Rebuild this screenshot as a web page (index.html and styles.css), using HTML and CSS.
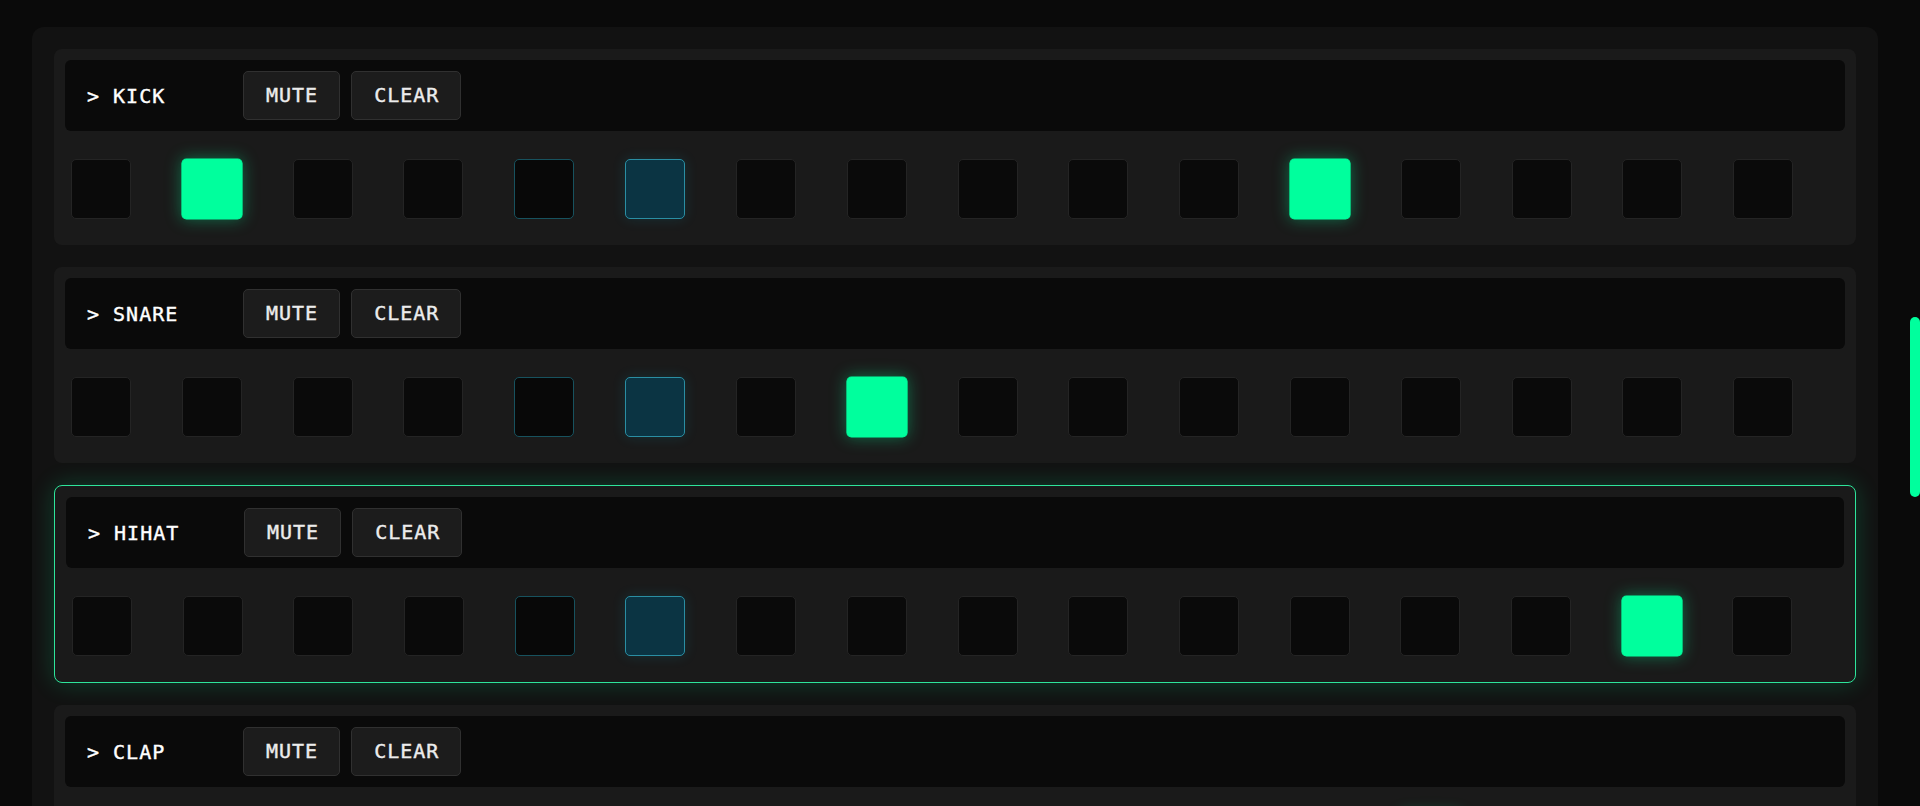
FILE: index.html
```html
<!DOCTYPE html>
<html lang="en">
<head>
<meta charset="utf-8">
<title>Step Sequencer</title>
<link rel="stylesheet" href="styles.css">
</head>
<body>
<div class="page">
  <main class="app">
    <section class="panel">
      <div class="track">
        <div class="track-head">
          <span class="track-name">&gt; KICK</span>
          <button class="btn">MUTE</button>
          <button class="btn">CLEAR</button>
        </div>
        <div class="steps">
          <div class="step"></div><div class="step on"></div><div class="step"></div><div class="step"></div>
          <div class="step trail"></div><div class="step head"></div><div class="step"></div><div class="step"></div>
          <div class="step"></div><div class="step"></div><div class="step"></div><div class="step on"></div>
          <div class="step"></div><div class="step"></div><div class="step"></div><div class="step"></div>
        </div>
      </div>

      <div class="track">
        <div class="track-head">
          <span class="track-name">&gt; SNARE</span>
          <button class="btn">MUTE</button>
          <button class="btn">CLEAR</button>
        </div>
        <div class="steps">
          <div class="step"></div><div class="step"></div><div class="step"></div><div class="step"></div>
          <div class="step trail"></div><div class="step head"></div><div class="step"></div><div class="step on"></div>
          <div class="step"></div><div class="step"></div><div class="step"></div><div class="step"></div>
          <div class="step"></div><div class="step"></div><div class="step"></div><div class="step"></div>
        </div>
      </div>

      <div class="track is-selected">
        <div class="track-head">
          <span class="track-name">&gt; HIHAT</span>
          <button class="btn">MUTE</button>
          <button class="btn">CLEAR</button>
        </div>
        <div class="steps">
          <div class="step"></div><div class="step"></div><div class="step"></div><div class="step"></div>
          <div class="step trail"></div><div class="step head"></div><div class="step"></div><div class="step"></div>
          <div class="step"></div><div class="step"></div><div class="step"></div><div class="step"></div>
          <div class="step"></div><div class="step"></div><div class="step on"></div><div class="step"></div>
        </div>
      </div>

      <div class="track">
        <div class="track-head">
          <span class="track-name">&gt; CLAP</span>
          <button class="btn">MUTE</button>
          <button class="btn">CLEAR</button>
        </div>
        <div class="steps">
          <div class="step"></div><div class="step"></div><div class="step"></div><div class="step"></div>
          <div class="step trail"></div><div class="step head"></div><div class="step"></div><div class="step"></div>
          <div class="step"></div><div class="step"></div><div class="step"></div><div class="step"></div>
          <div class="step on"></div><div class="step"></div><div class="step"></div><div class="step"></div>
        </div>
      </div>
    </section>
  </main>
  <aside class="rail" aria-hidden="true">
    <div class="thumb"></div>
  </aside>
</div>
</body>
</html>
```

FILE: styles.css
```css
html {
  background: #0a0a0a;
}

body {
  margin: 0;
  background: #0a0a0a;
  color: #eeeeee;
  font-family: "DejaVu Sans Mono", "Liberation Mono", monospace;
}

.page {
  display: flex;
  align-items: stretch;
}

.app {
  flex: 1;
  min-width: 0;
  padding: 27px 32px 32px;
}

.rail {
  flex: none;
  width: 10px;
}

.thumb {
  margin-top: 317px;
  height: 180px;
  border-radius: 5px;
  background: #00ff9d;
}

.panel {
  background: #121212;
  border-radius: 12px;
  padding: 22px;
  display: flex;
  flex-direction: column;
  gap: 22px;
  box-shadow: 0 0 8px rgba(255, 255, 255, 0.015);
}

.track {
  background: #1a1a1a;
  border-radius: 8px;
  padding: 11px;
}

.track.is-selected {
  border: 1px solid #2ee59b;
  box-shadow: 0 0 24px rgba(0, 255, 157, 0.2);
}

.track-head {
  display: flex;
  align-items: center;
  gap: 11px;
  background: #0a0a0a;
  border-radius: 6px;
  padding: 11px 22px;
}

.track-name {
  width: 145px;
  flex: none;
  font-size: 20px;
  letter-spacing: 1px;
  color: #ffffff;
  white-space: nowrap;
  -webkit-text-stroke: 0.4px currentColor;
}

.btn {
  font-family: inherit;
  font-size: 20px;
  letter-spacing: 1px;
  line-height: 23px;
  padding: 12px 21px 12px 22px;
  background: #1c1c1c;
  border: 1px solid #303030;
  border-radius: 5px;
  color: #ececec;
  -webkit-text-stroke: 0.4px currentColor;
}

.steps {
  display: grid;
  grid-template-columns: repeat(16, 1fr);
  gap: 5px;
  padding: 28px 6px 15px;
}

.step {
  width: 60px;
  height: 60px;
  box-sizing: border-box;
  background: #0a0a0a;
  border: 1px solid #242424;
  border-radius: 5px;
}

.step.on {
  background: #00ff9d;
  border-color: #00ff9d;
  box-shadow: 0 0 16px rgba(0, 255, 157, 0.35);
  transform: scale(1.02);
}

.step.trail {
  background: #080808;
  border-color: #17525e;
}

.step.head {
  background: #0b3443;
  border-color: #2a8ea3;
  box-shadow: 0 0 14px rgba(0, 190, 230, 0.14);
}
```
